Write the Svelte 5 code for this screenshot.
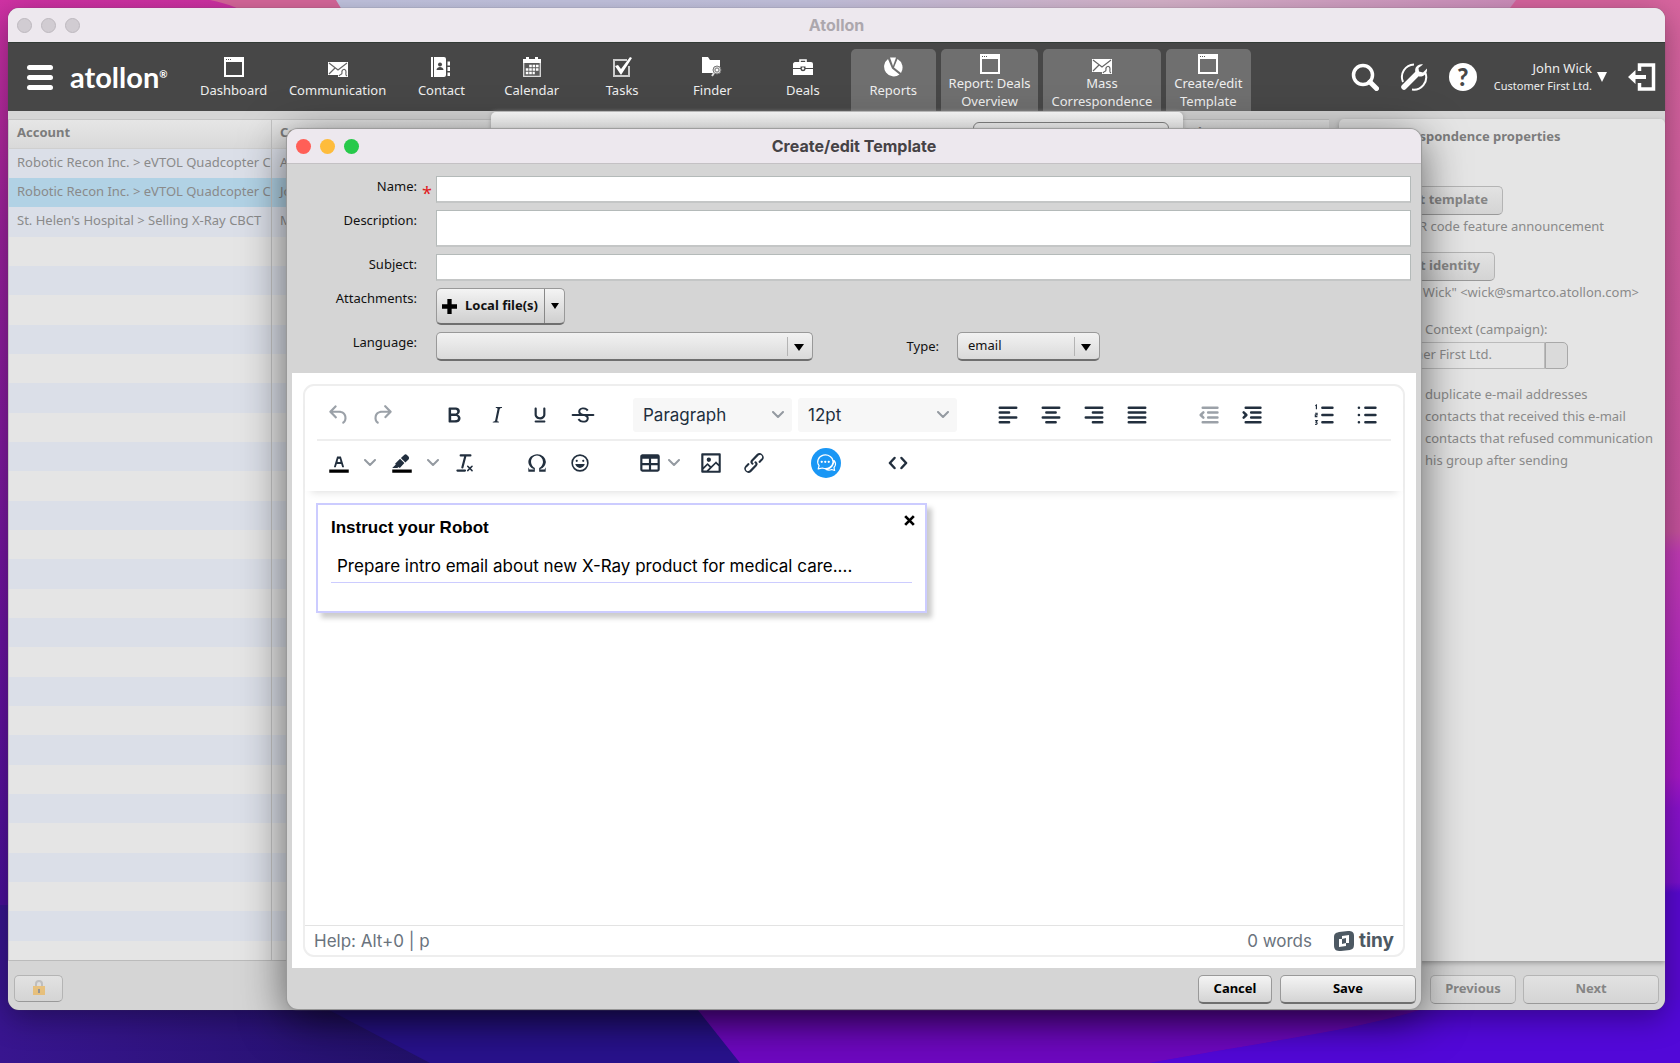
<script lang="ts">
	// Main navigation tabs; "open" tabs are drawn with the lighter background.
	const tabs = [
		{ label: 'Dashboard', icon: 'window', open: false, size: '' },
		{ label: 'Communication', icon: 'mail', open: false, size: 'wide' },
		{ label: 'Contact', icon: 'contact', open: false, size: '' },
		{ label: 'Calendar', icon: 'calendar', open: false, size: '' },
		{ label: 'Tasks', icon: 'task', open: false, size: '' },
		{ label: 'Finder', icon: 'finder', open: false, size: '' },
		{ label: 'Deals', icon: 'case', open: false, size: '' },
		{ label: 'Reports', icon: 'pie', open: true, size: '' },
		{ label: 'Report: Deals Overview', icon: 'window', open: true, size: 'medium' },
		{ label: 'Mass Correspondence', icon: 'mail', open: true, size: 'large' },
		{ label: 'Create/edit Template', icon: 'window', open: true, size: 'small' }
	];

	const contacts = [
		{ account: 'Robotic Recon Inc. > eVTOL Quadcopter C', contact: 'Adam' },
		{ account: 'Robotic Recon Inc. > eVTOL Quadcopter C', contact: 'Jo' },
		{ account: "St. Helen's Hospital > Selling X-Ray CBCT", contact: 'Mary' }
	];
	const selectedRow = 1;
	// Empty striped rows that fill up the rest of the list.
	const rows = Array.from({ length: 40 }, (_, i) => contacts[i] ?? { account: '', contact: '' });

	const options = [
		{ lead: 'Skip', text: 'duplicate e-mail addresses' },
		{ lead: 'Skip', text: 'contacts that received this e-mail' },
		{ lead: 'Skip', text: 'contacts that refused communication' },
		{ lead: 'Save t', text: 'his group after sending' }
	];

	// Toolbar icons on a 24px grid
	const glyphs: Record<string, string> = {
		undo: 'M6.4 8H12c3.7 0 6.2 2 6.8 5.1.6 2.7-.4 5.6-2.3 6.8a1 1 0 01-1-1.8c1.1-.6 1.8-2.7 1.4-4.6-.5-2.1-2.1-3.5-4.9-3.5H6.4l3.3 3.3a1 1 0 11-1.4 1.4l-5-5a1 1 0 010-1.4l5-5a1 1 0 011.4 1.4L6.4 8z',
		redo: 'M17.6 10H12c-2.8 0-4.4 1.4-4.9 3.5-.4 2 .3 4 1.4 4.6a1 1 0 11-1 1.8c-2-1.2-2.9-4.1-2.3-6.8.6-3 3-5.1 6.8-5.1h5.6l-3.3-3.3a1 1 0 111.4-1.4l5 5a1 1 0 010 1.4l-5 5a1 1 0 01-1.4-1.4l3.3-3.3z',
		bold: 'M7.8 19c-.3 0-.5 0-.6-.2l-.2-.5V5.7c0-.2 0-.4.2-.5l.6-.2h5c1.5 0 2.7.3 3.5 1 .7.6 1.1 1.4 1.1 2.5a3 3 0 01-.6 1.9c-.4.6-1 1-1.6 1.2.4.1.9.3 1.3.6s.8.7 1 1.2c.4.4.5 1 .5 1.6 0 1.3-.4 2.3-1.3 3-.8.7-2.1 1-3.8 1H7.8zm5-8.3c.6 0 1.2-.1 1.6-.5.4-.3.6-.7.6-1.3 0-1.1-.8-1.7-2.3-1.7H9.3v3.5h3.4zm.5 6c.7 0 1.3-.1 1.7-.4.4-.4.6-.9.6-1.5s-.2-1-.7-1.4c-.4-.3-1-.4-2-.4H9.4v3.8h4z',
		italic: 'M16.7 4.7l-.1.9h-.3c-.6 0-1 0-1.4.3-.3.3-.4.6-.5 1.1l-2.1 9.8v.6c0 .5.4.8 1.4.8h.2l-.2.8H8l.2-.8h.2c1.1 0 1.8-.5 2-1.5l2-9.8.1-.5c0-.6-.4-.8-1.4-.8h-.3l.2-.9h5.8z',
		underline: 'M16 5c.6 0 1 .4 1 1v5.5a4 4 0 01-.4 1.8l-1 1.4a5.3 5.3 0 01-5.5 1 5 5 0 01-1.6-1c-.5-.4-.8-.9-1.1-1.4a4 4 0 01-.4-1.8V6c0-.6.4-1 1-1s1 .4 1 1v5.5c0 .3 0 .6.2 1l.6.7a3.3 3.3 0 002.2.8 3.4 3.4 0 002.2-.8c.3-.2.4-.5.6-.8l.2-.9V6c0-.6.4-1 1-1zM8 17h8c.6 0 1 .4 1 1s-.4 1-1 1H8a1 1 0 010-2z',
		strike: 'M15.6 8.5c-.5-.7-1-1.1-1.3-1.3-.6-.4-1.3-.6-2-.6-2.7 0-2.8 1.7-2.8 2.1 0 1.6 1.8 2 3.2 2.3 4.4.9 4.6 2.8 4.6 3.9 0 1.4-.7 4.1-5 4.1A6.2 6.2 0 017 16.4l1.5-1.1c.4.6 1.6 2 3.7 2 1.6 0 2.5-.4 3-1.2.4-.8.3-2-.8-2.6-.7-.4-1.6-.7-2.9-1-1-.2-3.9-.8-3.9-3.6C7.6 6 10.3 5 12.4 5c2.9 0 4.2 1.6 4.7 2.4l-1.5 1.1z',
		removeFormat: 'M13.2 6a1 1 0 010 .2l-2.6 10a1 1 0 01-1 .8h-.2a.8.8 0 01-.8-1l2.6-10H8a1 1 0 110-2h9a1 1 0 010 2h-3.8zM5 18h7a1 1 0 010 2H5a1 1 0 010-2zm13 1.5L16.5 18 15 19.5a.7.7 0 01-1-1l1.5-1.5-1.5-1.5a.7.7 0 011-1l1.5 1.5 1.5-1.5a.7.7 0 011 1L17.5 17l1.5 1.5a.7.7 0 01-1 1z',
		omega: 'M15 18h4l1-2v4h-6v-3.3l1.4-1a6 6 0 001.8-2.9 6.3 6.3 0 00-.1-4.1 5.8 5.8 0 00-3-3.2c-.6-.3-1.3-.5-2.1-.5a5.1 5.1 0 00-3.9 1.8 6.3 6.3 0 00-1.3 6 6.2 6.2 0 001.8 3l1.4.9V20H4v-4l1 2h4v-.5l-2-1L5.4 15A6.5 6.5 0 014 11c0-1 .2-1.9.6-2.7A7 7 0 016.3 6C7.1 5.4 8 5 9 4.5c1-.3 2-.5 3.1-.5a8.8 8.8 0 015.7 2 7 7 0 011.7 2.3 6 6 0 01.2 4.8c-.2.7-.6 1.3-1 1.9a7.6 7.6 0 01-3.6 2.5v.5z',
		emoji: 'M9 11c.6 0 1-.4 1-1s-.4-1-1-1a1 1 0 00-1 1c0 .6.4 1 1 1zm6 0c.6 0 1-.4 1-1s-.4-1-1-1a1 1 0 00-1 1c0 .6.4 1 1 1zm-3 5.5c2.1 0 4-1.5 4.4-3.5H7.6c.5 2 2.3 3.5 4.4 3.5zM12 4a8 8 0 100 16 8 8 0 000-16zm0 14.5a6.5 6.5 0 110-13 6.5 6.5 0 010 13z',
		table: 'M19 4a2 2 0 012 2v12a2 2 0 01-2 2H5a2 2 0 01-2-2V6c0-1.1.9-2 2-2h14zM5 14v4h6v-4H5zm14 0h-6v4h6v-4zm0-6h-6v4h6V8zM5 12h6V8H5v4z',
		image: 'M5 15.7l3.3-3.2c.3-.3.7-.3 1 0L12 15l4.1-4c.3-.4.8-.4 1 0l2 1.9V5H5v10.7zM5 18V19h3l2.8-2.9-2-2L5 17.9zm14-3l-2.5-2.4-6.4 6.5H19v-4zM4 3h16c.6 0 1 .4 1 1v16c0 .6-.4 1-1 1H4a1 1 0 01-1-1V4c0-.6.4-1 1-1zm6 8a2 2 0 100-4 2 2 0 000 4z',
		link: 'M6.2 12.3a1 1 0 011.4 1.4l-2 2a2 2 0 102.6 2.8l4.8-4.8a1 1 0 000-1.4 1 1 0 111.4-1.3 2.9 2.9 0 010 4L9.6 20a3.9 3.9 0 01-5.5-5.5l2-2zm11.6-.6a1 1 0 01-1.4-1.4l2-2a2 2 0 10-2.6-2.8L11 10.3a1 1 0 000 1.4A1 1 0 119.6 13a2.9 2.9 0 010-4L14.4 4a3.9 3.9 0 015.5 5.5l-2 2z'
	};

	// Icons built from straight strokes
	const strokes: Record<string, string> = {
		alignLeft: 'M4.4 5.2h15.2M4.4 9.7h8.600M4.4 14.3h15.2M4.4 18.8h8.600',
		alignCenter: 'M4.4 5.2h15.2M7.7 9.7h8.600M4.4 14.3h15.2M7.7 18.8h8.600',
		alignRight: 'M4.4 5.2h15.2M11 9.7h8.600M4.4 14.3h15.2M11 18.8h8.600',
		alignJustify: 'M4.4 5.2h15.2M4.4 9.7h15.2M4.4 14.3h15.2M4.4 18.8h15.2',
		outdent: 'M6.2 5.2h13.600M11.2 9.7h8.600M11.2 14.3h8.600M6.2 18.8h13.600M6.8 9.500L4.3 12l2.500 2.500',
		indent: 'M6.2 5.2h13.600M11.2 9.7h8.600M11.2 14.3h8.600M6.2 18.8h13.600M4.3 9.500L6.8 12l-2.500 2.500',
		numbered: 'M10.500 5.2h9.300M10.500 12h9.300M10.500 18.8h9.300',
		bullets: 'M10.500 5.2h9.300M10.500 12h9.300M10.500 18.8h9.300M4.500 5.2h.1M4.500 12h.1M4.500 18.8h.1',
		code: 'M8.800 7.4L4.500 12l4.300 4.600M15.200 7.4l4.300 4.600-4.300 4.600'
	};

	let name = $state('');
	let description = $state('');
	let subject = $state('');
	let prompt = $state('Prepare intro email about new X-Ray product for medical care....');
</script>

{#snippet glyph(id: string)}
	<svg class="glyph" viewBox="0 0 24 24" aria-hidden="true">
		{#if glyphs[id]}
			<path d={glyphs[id]} fill="currentColor" fill-rule="evenodd" />
			{#if id === 'strike'}
				<path d="M2.500 12h19" stroke="currentColor" stroke-width="2" stroke-linecap="round" />
			{/if}
		{:else}
			<path d={strokes[id]} fill="none" stroke="currentColor" stroke-width="2.300" stroke-linecap="round" stroke-linejoin="round" />
			{#if id === 'numbered'}
				<path d="M4 3.500l1-.7v4M3.800 10.400h1.800v1.500H4v1.600h1.900M3.800 17.200h1.900l-1 1.500c1.600.2 1.200 2.300-.9 2" fill="none" stroke="currentColor" stroke-width="1.100" />
			{/if}
		{/if}
	</svg>
{/snippet}

{#snippet tool(id: string, label: string, disabled: boolean)}
	<button class="tool" type="button" aria-label={label} {disabled}>{@render glyph(id)}</button>
{/snippet}

{#snippet chevron()}
	<svg class="chevron" viewBox="0 0 12 8" aria-hidden="true">
		<path d="M1 1l5 5 5-5" fill="none" stroke="currentColor" stroke-width="2" stroke-linecap="round" stroke-linejoin="round" />
	</svg>
{/snippet}

{#snippet navIcon(id: string)}
	<svg class="nav-icon" viewBox="0 0 20 20" aria-hidden="true">
		{#if id === 'window'}
			<path d="M0 0h20v20H0zM2 5v13h16V5z" fill="#fff" fill-rule="evenodd" />
			<path d="M2 2.500h1M4 2.500h1M6 2.500h1" stroke="#555" stroke-width="1" />
		{:else if id === 'mail'}
			<path d="M0 5h20v15H10v-2H0z" fill="#fff" />
			<path d="M1 6l9 7 9-7M1 17l6-6M11 19c1-2 3-1 3-3-1-4 4-5 4-1 0 2-1 3 1 4" fill="none" stroke="#666" stroke-width="1.200" />
		{:else if id === 'contact'}
			<path d="M0 0h2v20H0zM3 0h10a2 2 0 012 2v16a2 2 0 01-2 2H3zM16.500 4.500H19v4h-2.500zM16.500 10H19v4h-2.500zM16.500 15.500H19V19h-2.500z" fill="#fff" />
			<circle cx="9" cy="7.500" r="2" fill="#474747" />
			<path d="M5.500 13c0-2 2-3 3.500-3s3.500 1 3.500 3z" fill="#474747" />
		{:else if id === 'calendar'}
			<path d="M1 2h3V0h3v2h6V0h3v2h3v4H1z" fill="#fff" />
			<path d="M1.700 6v13.300h16.600V6" fill="#5c5c5c" stroke="#ddd" stroke-width="1.300" />
			<path d="M7.200 9h9.500M3.800 12.500h12.700M3.800 16h9" stroke="#fff" stroke-width="2.300" stroke-dasharray="2.600 .8" />
		{:else if id === 'task'}
			<path d="M15 3H2v16h15V9" fill="none" stroke="#ccc" stroke-width="2" />
			<path d="M3 9l3-1 3 4 9-12 2 1L9 18z" fill="#fff" />
		{:else if id === 'finder'}
			<path d="M0 0h6l2 3h10v13H0z" fill="#fff" />
			<circle cx="15" cy="13" r="4" fill="#ddd" stroke="#777" />
			<circle cx="15" cy="13" r="2" fill="#fff" stroke="#777" />
			<path d="M12 16l-2 3" stroke="#ddd" stroke-width="2" />
		{:else if id === 'case'}
			<path d="M7 5V3h6v2" fill="none" stroke="#fff" stroke-width="1.600" />
			<path d="M2 5h16a2 2 0 012 2v4h-7.500V9.500h-5V11H0V7c0-1 1-2 2-2zM0 12h7.500c0 3 5 3 5 0H20v6H0z" fill="#fff" />
			<circle cx="10" cy="11.500" r="1.200" fill="#fff" />
		{:else}
			<path d="M5 2L9 11.500l7.500 6A9.500 9.500 0 1 1 5 2z" fill="#fff" />
			<path d="M7 .5h6L10 9z" fill="#fff" />
			<path d="M14.500 2A10 10 0 0118 16l-7-5.500z" fill="#fff" />
		{/if}
	</svg>
{/snippet}

<div class="desktop">
	<svg class="wallpaper" viewBox="0 0 1680 1063" preserveAspectRatio="none" aria-hidden="true">
		<defs>
			<linearGradient id="left" x1="0" y1="0" x2="0" y2="1">
				<stop offset="0" stop-color="#d032a4" />
				<stop offset=".22" stop-color="#9a219c" />
				<stop offset=".6" stop-color="#6a12a0" />
				<stop offset=".85" stop-color="#4a0f9a" />
			</linearGradient>
			<linearGradient id="right" x1="0" y1="0" x2="0" y2="1">
				<stop offset="0" stop-color="#d8659f" />
				<stop offset=".5" stop-color="#c5529c" />
				<stop offset=".52" stop-color="#c03bb4" />
				<stop offset=".73" stop-color="#a518c6" />
				<stop offset=".76" stop-color="#8a12cc" />
				<stop offset=".83" stop-color="#7810cc" />
				<stop offset=".84" stop-color="#5808d0" />
			</linearGradient>
			<linearGradient id="sky">
				<stop offset="0" stop-color="#c4c6e2" />
				<stop offset=".4" stop-color="#c6c4e0" />
				<stop offset=".7" stop-color="#d8b4cc" />
				<stop offset="1" stop-color="#cf8fbd" />
			</linearGradient>
			<linearGradient id="floor">
				<stop offset="0" stop-color="#38158f" />
				<stop offset="1" stop-color="#211168" />
			</linearGradient>
		</defs>
		<path d="M0 0h840v1063H0z" fill="url(#left)" />
		<path d="M840 0h840v1063H840z" fill="url(#right)" />
		<path d="M210 0h150v40h-80C260 18 240 6 210 0z" fill="#d9689c" />
		<path d="M336 0h1180l-30 40H360z" fill="url(#sky)" />
		<path d="M0 905h300l140 158H0z" fill="url(#floor)" />
		<path d="M310 1000h400l40 63H430z" fill="#28128c" />
		<path d="M690 1000h760c-80 30-180 40-300 63H740z" fill="#6e08c0" />
		<path d="M1450 1000c-80 30-180 40-300 63h530v-63z" fill="#5208d8" />
	</svg>

	<!-- Main application window -->
	<div class="window app">
		<header class="titlebar">
			<span class="lights idle"><i></i><i></i><i></i></span>
			<span class="title">Atollon</span>
		</header>

		<div class="navbar">
			<button class="burger" type="button" aria-label="Menu"><i></i><i></i><i></i></button>
			<a class="logo" href="#home">atollon<sup>®</sup></a>
			<nav class="tabs">
				{#each tabs as tab}
					<a href="#tab" class="tab {tab.size}" class:open={tab.open} class:two-line={tab.size && tab.size !== 'wide'}>
						{@render navIcon(tab.icon)}
						<span>{tab.label}</span>
					</a>
				{/each}
			</nav>
			<div class="nav-right">
				<button type="button" aria-label="Search">
					<svg viewBox="0 0 28 28"><circle cx="12" cy="12" r="9.500" fill="none" stroke="#fff" stroke-width="3.500" /><path d="M19 19l6.500 6.500" stroke="#fff" stroke-width="5" stroke-linecap="round" /></svg>
				</button>
				<button type="button" aria-label="Settings">
					<svg viewBox="0 0 28 28">
						<path d="M3 19A12.500 12.500 0 0114 1.500M25.500 10A12.500 12.500 0 0112 26.500" fill="none" stroke="#fff" stroke-width="2" />
						<path d="M4 24L17 11" stroke="#fff" stroke-width="5.500" stroke-linecap="round" />
						<path d="M23 1.500c-5-1-9 3-7.500 8l3.500 4c5 .5 8.500-3 8-8l-4 4-4-1-.5-3.500z" fill="#fff" />
					</svg>
				</button>
				<button type="button" aria-label="Help" class="help"><span>?</span></button>
				<button type="button" class="user">
					<span class="user-text"><span>John Wick</span><small>Customer First Ltd.</small></span>
					<svg class="user-arrow" viewBox="0 0 10 10"><path d="M0 0h10L5 10z" fill="#fff" /></svg>
				</button>
				<button type="button" aria-label="Log out">
					<svg viewBox="0 0 28 28"><path d="M11.500 8V2h14v24h-14v-6" fill="none" stroke="#fff" stroke-width="3.500" /><path d="M0 14l7.500-7v5H18v4H7.500v5z" fill="#fff" /></svg>
				</button>
			</div>
		</div>

		<div class="workspace">
			<div class="list">
				<table>
					<thead>
						<tr><th class="account">Account</th><th class="contact">Contact</th><th>Other</th></tr>
					</thead>
					<tbody>
						{#each rows as row, i}
							<tr class:selected={i === selectedRow}>
								<td>{row.account}</td>
								<td>{row.contact}</td>
								<td></td>
							</tr>
						{/each}
					</tbody>
				</table>
			</div>

			<aside class="properties">
				<h2>Mass correspondence properties</h2>
				<button class="btn template" type="button" disabled>Select template</button>
				<p>X-Ray QR code feature announcement</p>
				<button class="btn identity" type="button" disabled>Select identity</button>
				<p class="sender">"John Wick" &lt;wick@smartco.atollon.com&gt;</p>
				<label class="context-label" for="context"><span class="lead">Parent</span>Context (campaign):</label>
				<div class="combo">
					<input id="context" value="Customer First Ltd." disabled />
					<button type="button" aria-label="Browse" disabled></button>
				</div>
				{#each options as option}
					<label class="option">
						<span class="lead"><input type="checkbox" disabled /> {option.lead}</span>{option.text}
					</label>
				{/each}
			</aside>
		</div>

		<footer class="app-footer">
			<button class="btn lock" type="button" aria-label="Lock" disabled>
				<svg viewBox="0 0 12 16"><path d="M3 8V5a3 3 0 016 0v3" fill="none" stroke="#aaa" stroke-width="2" /><path d="M0 7h12v9H0z" fill="#f0b040" /><path d="M5 10h2v4H5z" fill="#666" /></svg>
			</button>
			<span class="spacer"></span>
			<button class="btn previous" type="button" disabled>Previous</button>
			<button class="btn main-action" type="button" disabled>Next</button>
		</footer>

		<div class="sheet"><span></span></div>
	</div>

	<!-- Template editor window -->
	<div class="window dialog" role="dialog" aria-label="Create/edit Template">
		<header class="titlebar">
			<span class="lights"><i></i><i></i><i></i></span>
			<span class="title">Create/edit Template</span>
		</header>

		<form class="form">
			<label for="name">Name:</label>
			<span class="required">*</span>
			<input id="name" class="field" bind:value={name} />

			<label for="description">Description:</label>
			<span></span>
			<textarea id="description" class="field tall" bind:value={description}></textarea>

			<label for="subject">Subject:</label>
			<span></span>
			<input id="subject" class="field" bind:value={subject} />

			<label for="attach">Attachments:</label>
			<span></span>
			<div class="attach">
				<button id="attach" type="button">
					<svg viewBox="0 0 14 14"><path d="M7 0v14M0 7h14" stroke="#000" stroke-width="4" /></svg>
					<span>Local file(s)</span>
				</button>
				<button class="more" type="button" aria-label="More sources"><b class="arrow"></b></button>
			</div>

			<label for="language">Language:</label>
			<span></span>
			<div class="pair">
				<span class="drop language"><select id="language"><option></option></select><b class="arrow"></b></span>
				<label for="type">Type:</label>
				<span class="drop type"><select id="type"><option>email</option></select><b class="arrow"></b></span>
			</div>
		</form>

		<div class="editor-wrap">
			<div class="editor">
				<div class="toolbar">
					<div class="tool-row">
						<div class="group">
							{@render tool('undo', 'Undo', true)}
							{@render tool('redo', 'Redo', true)}
						</div>
						<div class="group">
							{@render tool('bold', 'Bold', false)}
							{@render tool('italic', 'Italic', false)}
							{@render tool('underline', 'Underline', false)}
							{@render tool('strike', 'Strikethrough', false)}
						</div>
						<div class="group selects">
							<span class="pick"><select aria-label="Block"><option>Paragraph</option></select>{@render chevron()}</span>
							<span class="pick"><select aria-label="Font size"><option>12pt</option></select>{@render chevron()}</span>
						</div>
						<div class="group">
							{@render tool('alignLeft', 'Align left', false)}
							{@render tool('alignCenter', 'Align center', false)}
							{@render tool('alignRight', 'Align right', false)}
							{@render tool('alignJustify', 'Justify', false)}
						</div>
						<div class="group">
							{@render tool('outdent', 'Decrease indent', true)}
							{@render tool('indent', 'Increase indent', false)}
						</div>
						<div class="group">
							{@render tool('numbered', 'Numbered list', false)}
							{@render tool('bullets', 'Bullet list', false)}
						</div>
					</div>
					<div class="tool-row second-row">
						<div class="group">
							<button class="tool" type="button" aria-label="Text color">
								<svg class="glyph" viewBox="0 0 24 24">
									<path d="M3 18h18v3H3z" fill="#000" />
									<path d="M8.700 16h-.8a.5.5 0 01-.5-.6l2.700-9c.1-.3.3-.4.5-.4h2.800c.2 0 .4.1.5.4l2.700 9a.5.5 0 01-.5.6h-.8a.5.5 0 01-.4-.4l-.7-2.200c0-.3-.3-.4-.5-.4h-3.400c-.2 0-.4.1-.5.4l-.7 2.200c0 .3-.2.4-.4.4zm2.600-7.600l-.6 2a.5.5 0 00.5.6h1.600a.5.5 0 00.5-.6l-.6-2c0-.3-.3-.4-.5-.4h-.4c-.2 0-.4.1-.5.4z" fill="currentColor" fill-rule="evenodd" />
								</svg>
							</button>
							<button class="split" type="button" aria-label="Text color menu">{@render chevron()}</button>
							<button class="tool" type="button" aria-label="Background color">
								<svg class="glyph" viewBox="0 0 24 24">
									<path d="M3 18h18v3H3z" fill="#000" />
									<path d="M7.700 16.700H3l3.300-3.300-.7-.8L10.200 8l4 4.100-4 4.200c-.2.2-.6.2-.8 0l-.6-.7-1.100 1.100zm5-7.500L11 7.400l3-2.900a2 2 0 012.600 0L18 6c.7.7.7 2 0 2.700l-2.900 2.900-1.800-1.800-.5-.6" fill="currentColor" />
								</svg>
							</button>
							<button class="split" type="button" aria-label="Background color menu">{@render chevron()}</button>
							{@render tool('removeFormat', 'Clear formatting', false)}
						</div>
						<div class="group">
							{@render tool('omega', 'Special character', false)}
							{@render tool('emoji', 'Emojis', false)}
						</div>
						<div class="group">
							<button class="table-tool" type="button" aria-label="Table">{@render glyph('table')}{@render chevron()}</button>
							{@render tool('image', 'Insert image', false)}
							{@render tool('link', 'Insert link', false)}
						</div>
						<div class="group">
							<button class="tool" type="button" aria-label="Robot">
								<svg class="robot" viewBox="0 0 30 30">
									<circle cx="15" cy="15" r="15" fill="#1a97f5" />
									<path d="M7.200 20.800l.9-3.200A7.700 6.800 0 1 1 11.500 20zM23 12.500c2.200 2.500 1.500 5.300 0 7l.6 3-2.900-1c-2 .9-4 .8-5.700-.1 4-.4 7.500-3.500 8-8.900z" fill="none" stroke="#fff" stroke-width="1.200" stroke-linejoin="round" />
									<path d="M10.700 13.800h.1M14.200 13.800h.1M17.700 13.800h.1" stroke="#fff" stroke-width="2.200" stroke-linecap="round" />
								</svg>
							</button>
						</div>
						<div class="group">
							{@render tool('code', 'Source code', false)}
						</div>
					</div>
				</div>

				<div class="content">
					<div class="prompt">
						<div class="prompt-head">
							<label for="prompt">Instruct your Robot</label>
							<button type="button" aria-label="Close">
								<svg viewBox="0 0 12 12"><path d="M2 2l8 8M10 2l-8 8" stroke="#000" stroke-width="2.500" /></svg>
							</button>
						</div>
						<input id="prompt" bind:value={prompt} />
					</div>
				</div>

				<div class="status">
					<span>Help: Alt+0 | p</span>
					<span class="spacer"></span>
					<span>0 words</span>
					<a class="tiny" href="#tiny">
						<svg viewBox="0 0 20 20"><path d="M5 1l9-1c4 0 6 1 6 5v8c0 4-1 5-4 6l-9 1c-5 0-7-1-7-6V7c0-4 1-5 5-6zM5 8v8l7-1v-3h3V4L8 5v3zM8 8l4-1v5l-4 1z" fill="currentColor" fill-rule="evenodd" /></svg>
						tiny
					</a>
				</div>
			</div>
		</div>

		<footer class="dialog-footer">
			<button class="btn cancel" type="button">Cancel</button>
			<button class="btn main-action" type="button">Save</button>
		</footer>
	</div>
</div>

<style>
	:global(body) {
		margin: 0;
	}
	.desktop {
		--ui: 'Noto Sans', 'Open Sans', sans-serif;
		--sys: Inter, 'Liberation Sans', sans-serif;
		position: relative;
		box-sizing: border-box;
		height: 100vh;
		min-height: 700px;
		padding: 8px 15px 53px 8px;
		overflow: hidden;
		font: 13px/20px var(--ui);
		color: #111;
	}
	.desktop *,
	.desktop *::before {
		box-sizing: border-box;
	}
	button,
	input,
	select,
	textarea {
		font: inherit;
		color: inherit;
		margin: 0;
	}
	button {
		padding: 0;
		border: 0;
		background: none;
	}
	a {
		color: inherit;
		text-decoration: none;
	}
	.wallpaper {
		position: absolute;
		inset: 0;
		width: 100%;
		height: 100%;
	}
	.spacer {
		flex: 1;
	}

	/* Windows */
	.window {
		display: flex;
		flex-direction: column;
		border-radius: 11px;
		background: #d5d5d5;
		overflow: hidden;
	}
	.app {
		position: relative;
		height: 100%;
		box-shadow: 0 0 1px #555, 0 8px 30px rgba(0, 0, 0, 0.35);
	}
	.dialog {
		position: absolute;
		top: 129px;
		right: 259px;
		bottom: 54px;
		left: 287px;
		box-shadow: 0 0 1px 1px #999, 0 10px 45px rgba(0, 0, 0, 0.6);
	}
	.titlebar {
		display: grid;
		grid-template-columns: 1fr auto 1fr;
		align-items: center;
		flex: none;
		height: 34px;
		padding: 0 9px;
		background: #ede8ee;
		font: 700 16px/20px var(--sys);
		color: #aca7ad;
	}
	.dialog .titlebar {
		height: 35px;
		border-bottom: 1px solid #c4c1c4;
		color: #454245;
	}
	.lights {
		display: flex;
		gap: 9px;
	}
	.lights i {
		width: 15px;
		height: 15px;
		border-radius: 50%;
		background: #ff5f57;
	}
	.lights i:nth-child(2) {
		background: #febc3c;
	}
	.lights i:nth-child(3) {
		background: #27c94a;
	}
	.lights.idle i {
		border: 1px solid #bdb8be;
		background: #d1ccd2;
	}

	/* Navigation bar */
	.navbar {
		display: flex;
		align-items: center;
		flex: none;
		height: 69px;
		padding: 0 9px 0 19px;
		border-top: 1px solid #333b36;
		background: #474747;
		color: #eee;
		line-height: 18px;
	}
	.burger {
		display: grid;
		flex: none;
		gap: 5px;
		width: 26px;
	}
	.burger i {
		height: 5px;
		border-radius: 3px;
		background: #fff;
	}
	.logo {
		flex: none;
		width: 98px;
		margin: 0 23px 0 17px;
		font: 700 29px/32px Lato, sans-serif;
		color: #fff;
		white-space: nowrap;
	}
	.logo sup {
		font-size: 10px;
		line-height: 10px;
		vertical-align: 10px;
	}
	.tabs {
		display: flex;
		flex: 0 1 1060px;
		align-self: flex-end;
		gap: 5px;
		height: 62px;
	}
	.tab {
		display: flex;
		flex: 1 1 85px;
		flex-direction: column;
		align-items: center;
		gap: 4px;
		padding-top: 8px;
		border-radius: 5px 5px 0 0;
		text-align: center;
	}
	.tab.wide {
		flex-basis: 112px;
	}
	.tab.medium {
		flex-basis: 97px;
	}
	.tab.large {
		flex-basis: 117px;
	}
	.tab.open {
		background: #6f6f6f;
	}
	.tab.two-line {
		gap: 0;
		padding-top: 5px;
	}
	.nav-icon {
		flex: none;
		width: 20px;
		height: 20px;
	}
	.nav-right {
		display: flex;
		align-items: center;
		gap: 21px;
		margin-left: auto;
	}
	.nav-right svg {
		display: block;
		width: 28px;
		height: 28px;
	}
	.help {
		display: grid;
		place-items: center;
		width: 28px;
		height: 28px;
		border-radius: 50%;
		background: #fff;
		font: 900 24px/28px Lato, sans-serif;
		color: #474747;
	}
	.user {
		display: flex;
		align-items: center;
		gap: 5px;
		margin-left: -4px;
	}
	.user-text {
		display: grid;
		text-align: right;
	}
	.user-text small {
		font-size: 11px;
	}
	.nav-right .user-arrow {
		width: 10px;
		height: 10px;
	}

	/* Workspace behind the dialog */
	.workspace {
		display: flex;
		flex: 1;
		gap: 10px;
		min-height: 0;
		padding-top: 8px;
		color: #8a8a8a;
	}
	.list {
		flex: 1;
		min-width: 0;
		overflow: hidden;
		border-bottom: 1px solid #bbb;
		background: #e5e5e5;
	}
	.list table {
		width: 100%;
		table-layout: fixed;
		border-collapse: separate;
		border-spacing: 0;
	}
	.list tr {
		height: 29px;
		background: #e5e5e5;
	}
	.list tbody tr:nth-child(3n) {
		height: 30px;
	}
	.list tbody tr:nth-child(odd) {
		background: #dbdfe8;
	}
	.list tbody tr.selected {
		background: #b1d2e5;
	}
	.list th,
	.list td {
		padding: 0 0 4px 8px;
		border-left: 1px solid #c4c4c4;
		overflow: hidden;
		text-align: left;
		white-space: nowrap;
	}
	.list th {
		height: 30px;
		border-top: 1px solid #c4c4c4;
		border-bottom: 1px solid #cfcfcf;
		background: linear-gradient(#e6e6e6, #d9d9d9);
		color: #7c7c7c;
	}
	.account {
		width: 263px;
	}
	.contact {
		width: 902px;
	}
	.properties {
		flex: 0 0 326px;
		padding: 6px 0 0 10px;
		overflow: hidden;
		border-radius: 5px 5px 0 0;
		background: #e5e5e5;
		box-shadow: 0 2px 5px #999;
		line-height: 22px;
		white-space: nowrap;
	}
	.properties h2 {
		margin: 0 0 39px;
		font: 700 13px/22px var(--ui);
		color: #7c7c7c;
	}
	.properties p {
		width: 255px;
		margin: 0;
		text-align: right;
	}
	.properties .sender {
		width: 290px;
	}
	.properties .btn {
		display: block;
		padding-right: 14px;
		text-align: right;
	}
	.template {
		width: 154px;
	}
	.identity {
		width: 146px;
		margin-top: 15px;
	}
	.context-label {
		display: block;
		margin: 15px 0 2px;
	}
	.combo {
		display: flex;
		width: 219px;
		height: 27px;
		margin-bottom: 14px;
	}
	.combo input {
		flex: 1;
		min-width: 0;
		padding: 0 0 4px 26px;
		border: 1px solid #bbb;
		background: none;
	}
	.combo button {
		width: 23px;
		border: 1px solid #a8a8a8;
		border-radius: 0 5px 5px 0;
		background: #dadada;
	}
	.option {
		display: flex;
	}
	.lead {
		display: inline-flex;
		align-items: center;
		gap: 4px;
		width: 76px;
	}
	.lead input {
		width: 14px;
		height: 14px;
	}

	/* Buttons shared by both windows */
	.btn {
		height: 29px;
		padding: 0 0 3px;
		border: 1px solid #999;
		border-bottom: 2px solid #6f6f6f;
		border-radius: 5px;
		background: linear-gradient(#f4f4f4, #d4d4d4);
		font-weight: 700;
		color: #000;
	}
	.btn:disabled {
		border-color: #b4b4b4;
		border-bottom: 1px solid #999;
		background: linear-gradient(#e2e2e2, #d4d4d4);
		color: #858585;
	}
	.app-footer {
		display: flex;
		flex: none;
		align-items: flex-start;
		gap: 7px;
		height: 49px;
		padding: 14px 6px 0;
	}
	.lock {
		display: grid;
		place-items: center;
		width: 49px;
		height: 27px;
	}
	.lock svg {
		width: 12px;
		height: 16px;
		opacity: 0.6;
	}
	.previous {
		width: 86px;
	}
	.main-action {
		width: 136px;
	}
	.sheet {
		position: absolute;
		top: 104px;
		left: 483px;
		width: 692px;
		height: 60px;
		padding: 10px 14px 0;
		border-radius: 5px 5px 0 0;
		background: linear-gradient(#fff, #f0f0f0);
		box-shadow: 0 0 4px #aaa;
	}
	.sheet span {
		display: block;
		width: 196px;
		height: 28px;
		margin-left: auto;
		border: 1px solid #888;
		border-radius: 6px;
	}

	/* Template form */
	.form {
		display: grid;
		grid-template-columns: 130px 19px 1fr;
		align-items: start;
		flex: none;
		row-gap: 7px;
		padding: 12px 10px 12px 0;
	}
	.form label {
		text-align: right;
	}
	.required {
		height: 20px;
		padding: 4px 4px 0 0;
		font-size: 18px;
		line-height: 26px;
		text-align: right;
		color: #e01b22;
	}
	.field {
		display: block;
		width: 100%;
		height: 27px;
		padding: 2px 6px;
		border: 1px solid #b4bab9;
		border-bottom: 2px solid #c4c6c6;
		border-radius: 0;
		background: #fff;
		resize: none;
	}
	.tall {
		height: 37px;
	}
	.attach {
		display: flex;
		width: 129px;
		height: 37px;
		border: 1px solid #999;
		border-bottom: 2px solid #6f6f6f;
		border-radius: 5px;
		background: linear-gradient(#f4f4f4, #cfcfcf);
	}
	.attach button {
		display: flex;
		flex: 1;
		align-items: center;
		gap: 8px;
		padding-left: 5px;
		font-weight: 700;
		white-space: nowrap;
	}
	.attach button span {
		padding-bottom: 3px;
	}
	.attach svg {
		width: 15px;
		height: 15px;
	}
	.attach .more {
		flex: 0 0 20px;
		justify-content: center;
		padding: 0;
		border-left: 1px solid #888;
	}
	.arrow {
		width: 0;
		border: 4px solid transparent;
		border-top: 6px solid #000;
		border-bottom: 0;
	}
	.pair {
		display: flex;
		align-items: center;
	}
	.pair label {
		width: 126px;
		padding-bottom: 2px;
	}
	.drop {
		position: relative;
		height: 29px;
	}
	.drop select {
		width: 100%;
		height: 100%;
		padding: 0 0 2px 10px;
		border: 1px solid #999;
		border-bottom: 2px solid #6f6f6f;
		border-radius: 5px;
		background: linear-gradient(#f2f2f2, #dadada);
		appearance: none;
	}
	.drop::before {
		content: '';
		position: absolute;
		top: 5px;
		right: 25px;
		height: 19px;
		border-left: 1px solid #b4b4b4;
	}
	.drop .arrow {
		position: absolute;
		top: 12px;
		right: 9px;
		border-width: 7px 5px 0;
	}
	.language {
		width: 377px;
	}
	.type {
		width: 143px;
		margin-left: 18px;
	}

	/* Rich text editor */
	.editor-wrap {
		display: flex;
		flex: 1;
		min-height: 0;
		margin: 0 5px;
		padding: 11px;
		background: #fff;
	}
	.editor {
		display: flex;
		flex: 1;
		flex-direction: column;
		min-width: 0;
		border: 2px solid #eee;
		border-radius: 11px;
		color: #222f3e;
		font: 17px/24px var(--sys);
	}
	.toolbar {
		flex: none;
		padding: 5px 12px 6px;
		box-shadow: 0 7px 8px -6px #ddd;
		border-radius: 11px 11px 0 0;
	}
	.tool-row {
		display: flex;
		align-items: center;
		gap: 29px;
		height: 48px;
	}
	.second-row {
		height: 46px;
		border-top: 2px solid #eee;
	}
	.group {
		display: flex;
		align-items: center;
	}
	.selects {
		gap: 6px;
	}
	.tool {
		display: grid;
		place-items: center;
		width: 43px;
		height: 34px;
	}
	.tool:disabled {
		color: #9ba1a8;
	}
	.glyph {
		display: block;
		width: 26px;
		height: 26px;
	}
	.robot {
		width: 30px;
		height: 30px;
	}
	.chevron {
		display: block;
		width: 12px;
		height: 8px;
		color: #949aa1;
	}
	.split {
		display: grid;
		place-items: center;
		width: 20px;
		height: 34px;
	}
	.table-tool {
		display: flex;
		align-items: center;
		gap: 5px;
		width: 59px;
		height: 34px;
		padding-left: 7px;
	}
	.pick {
		position: relative;
		width: 159px;
		height: 34px;
	}
	.pick select {
		width: 100%;
		height: 100%;
		padding: 0 10px;
		border: 0;
		border-radius: 3px;
		background: #f7f7f7;
		appearance: none;
	}
	.pick .chevron {
		position: absolute;
		top: 13px;
		right: 8px;
	}
	.content {
		flex: 1;
		padding: 12px 11px;
	}
	.prompt {
		width: 611px;
		max-width: 100%;
		height: 110px;
		padding: 9px 9px 9px 13px;
		border: 2px solid #ccf;
		background: #fff;
		box-shadow: 5px 5px 5px #ccc;
		color: #000;
	}
	.prompt-head {
		display: flex;
		align-items: flex-start;
		justify-content: space-between;
	}
	.prompt label {
		padding-top: 2px;
		font: 700 17px/24px 'Liberation Sans', sans-serif;
	}
	.prompt button svg {
		display: block;
		width: 13px;
		height: 13px;
	}
	.prompt input {
		display: block;
		width: calc(100% - 4px);
		height: 34px;
		margin-top: 9px;
		padding: 0 6px;
		border: 0;
		border-bottom: 1px solid #ccf;
	}
	.status {
		display: flex;
		flex: none;
		align-items: center;
		height: 30px;
		padding: 0 9px;
		border-top: 1px solid #e3e3e3;
		color: #6a737d;
	}
	.tiny {
		display: flex;
		align-items: center;
		gap: 5px;
		margin-left: 22px;
		font-size: 19px;
		font-weight: 700;
		color: #4d5963;
	}
	.tiny svg {
		width: 20px;
		height: 20px;
	}
	.dialog-footer {
		display: flex;
		flex: none;
		justify-content: flex-end;
		gap: 8px;
		height: 41px;
		padding: 7px 5px 0;
	}
	.cancel {
		width: 74px;
	}
</style>
